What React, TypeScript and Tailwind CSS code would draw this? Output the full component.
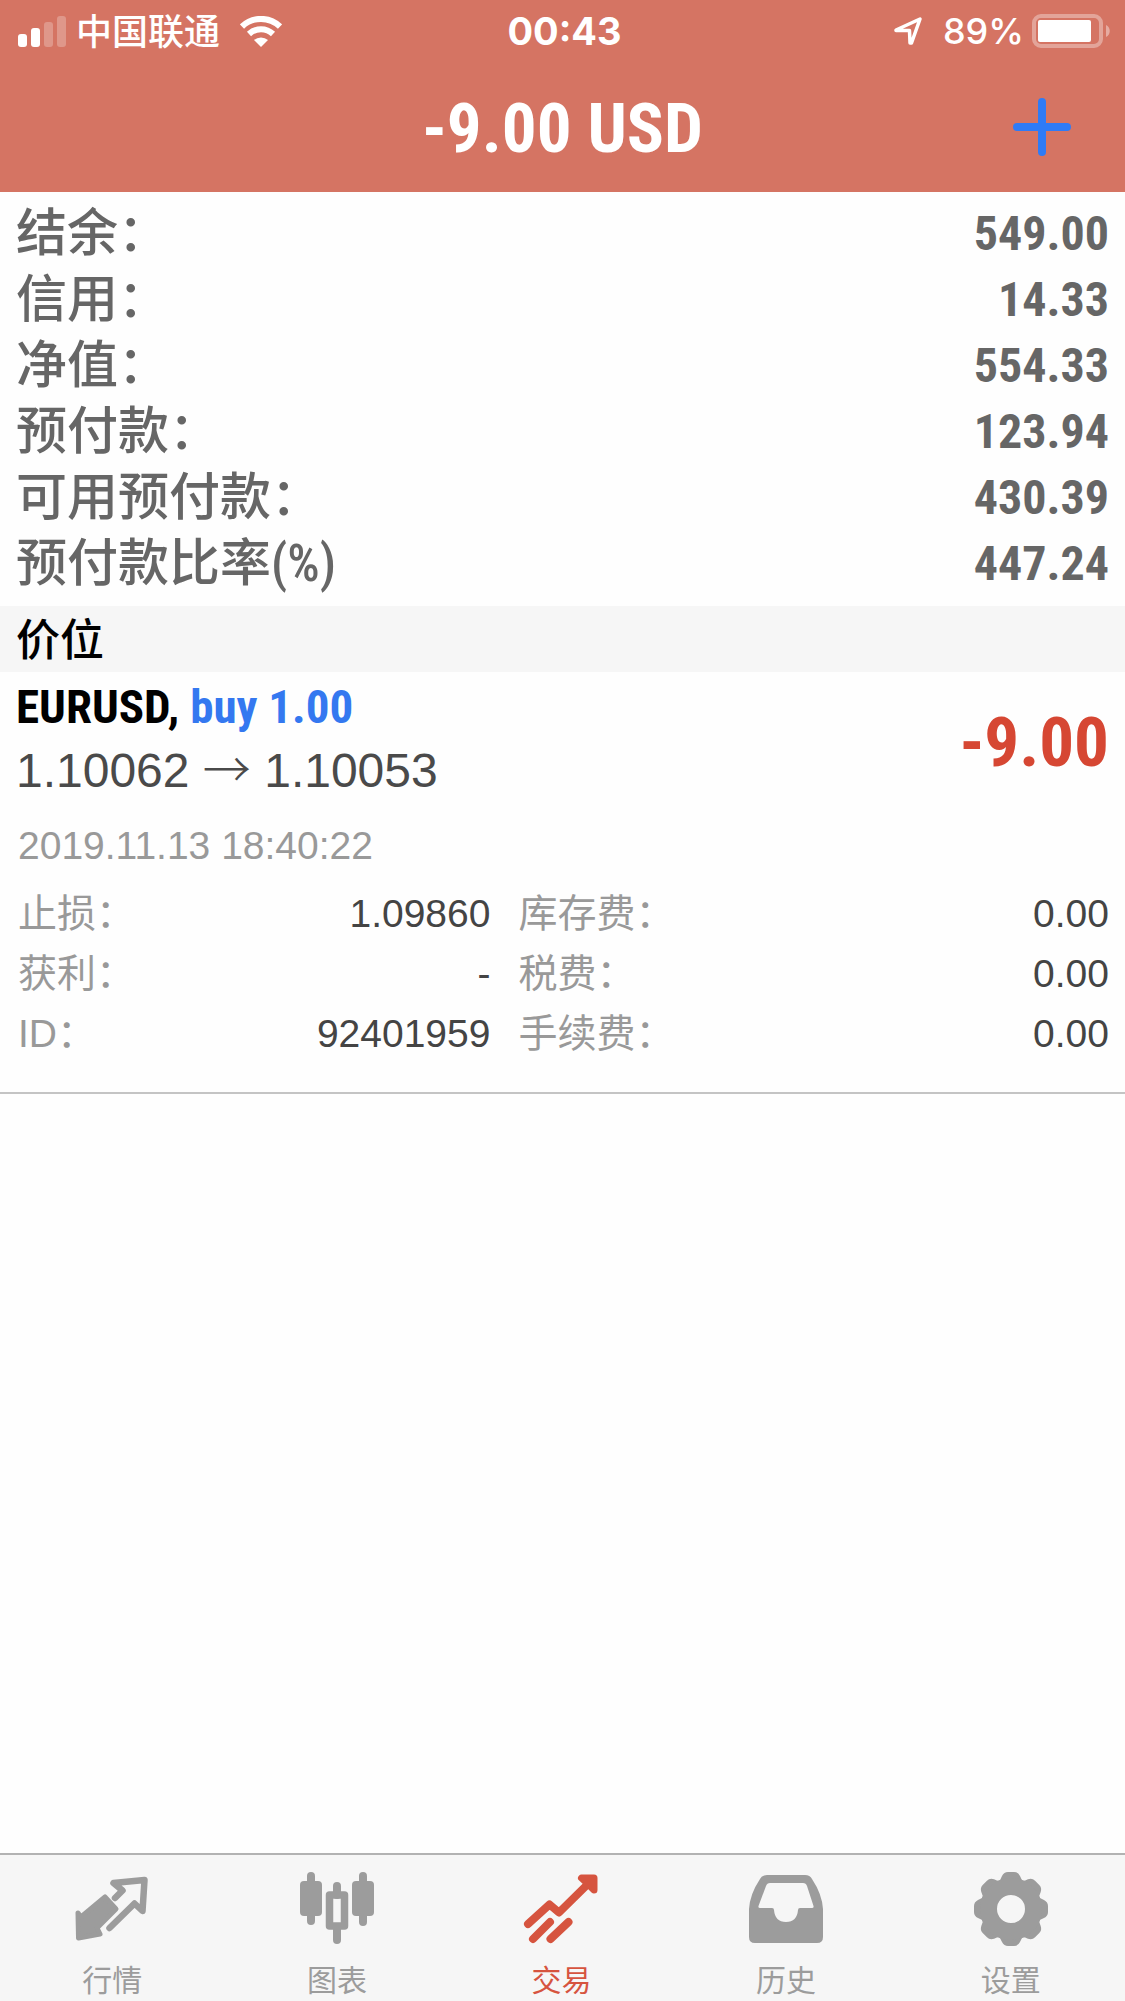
import type { ReactNode } from 'react';

const sans = "font-['Liberation_Sans','Noto_Sans_CJK_SC',sans-serif]";
const narrow = "font-['Roboto_Condensed','Noto_Sans_CJK_SC',sans-serif]";

function StatusBar() {
  return (
    <div className="grid h-[62px] grid-cols-[1fr_auto_1fr] items-center pr-[14px] pl-[18px] font-['Inter','Noto_Sans_CJK_SC',sans-serif] text-4xl leading-none">
      <div className="flex items-center">
        <svg className="h-[31px] w-12" viewBox="0 0 48 31" fill="#fff" aria-hidden="true">
          <rect x="0" y="18" width="9" height="13" rx="3" />
          <rect x="13" y="12" width="9" height="19" rx="3" />
          <rect x="26" y="6" width="9" height="25" rx="3" opacity="0.25" />
          <rect x="39" y="0" width="9" height="31" rx="3" opacity="0.25" />
        </svg>
        <span className="ml-[10px] pt-[2px] font-medium">中国联通</span>
        <svg className="ml-5 h-[31px] w-[42px]" viewBox="0 0 42 31" aria-hidden="true">
          <g fill="none" stroke="#fff" strokeWidth="6">
            <path d="M2 10.500A27.500 27.500 0 0 1 40 10.500" />
            <path d="M9 18A17.500 17.500 0 0 1 33 18" />
          </g>
          <path d="M21 31L14 24A11 11 0 0 1 28 24Z" fill="#fff" />
        </svg>
      </div>
      <time className="text-[38px] font-bold">00:43</time>
      <div className="flex items-center justify-end">
        <svg className="h-[30px] w-[30px]" viewBox="0 0 30 30" fill="none" aria-hidden="true">
          <path d="M3 14L27 3L18.500 27H17L16.500 14.500H3Z" stroke="#fff" strokeWidth="3.500" strokeLinejoin="round" />
        </svg>
        <span className="ml-5 font-medium">89%</span>
        <svg className="ml-2 h-[34px] w-[79px]" viewBox="0 0 79 34" aria-hidden="true">
          <rect x="2" y="2" width="67" height="30" rx="7" fill="none" stroke="#fff" strokeOpacity="0.35" strokeWidth="4" />
          <rect x="6" y="6" width="53" height="22" rx="2" fill="#fff" />
          <path d="M74 11C79 13 79 21 74 23Z" fill="#fff" fillOpacity="0.4" />
        </svg>
      </div>
    </div>
  );
}

const summary = [
  ['结余：', '549.00'],
  ['信用：', '14.33'],
  ['净值：', '554.33'],
  ['预付款：', '123.94'],
  ['可用预付款：', '430.39'],
  ['预付款比率(%)', '447.24'],
];

const details = [
  ['止损：', '1.09860'],
  ['库存费：', '0.00'],
  ['获利：', '-'],
  ['税费：', '0.00'],
  ['ID：', '92401959'],
  ['手续费：', '0.00'],
];

function Icon({ children }: { children: ReactNode }) {
  return (
    <svg
      className="h-[76px] w-[76px]"
      viewBox="0 0 76 76"
      fill="none"
      stroke="currentColor"
      strokeLinecap="round"
      strokeLinejoin="round"
      aria-hidden="true"
    >
      {children}
    </svg>
  );
}

const tabs: { label: string; active?: boolean; icon: ReactNode }[] = [
  {
    label: '行情',
    icon: (
      <Icon>
        <path d="M4 42L7 46L31 26L42 38L23 57L26 63L4.500 67Z" fill="currentColor" strokeWidth="5" />
        <path d="M41 27L48.500 19.500L39.500 12L70.500 9L68.500 40L60.500 32.500L35.500 57" strokeWidth="6.500" />
      </Icon>
    ),
  },
  {
    label: '图表',
    icon: (
      <Icon>
        <path d="M12 5V50M38 15V24M38 58V69M64 5V51" strokeWidth="8" />
        <rect x="1" y="10" width="22" height="35" rx="4" fill="currentColor" stroke="none" />
        <rect x="53" y="10" width="22" height="35" rx="4" fill="currentColor" stroke="none" />
        <rect x="30.500" y="24" width="15" height="31" strokeWidth="7.500" />
      </Icon>
    ),
  },
  {
    label: '交易',
    active: true,
    icon: (
      <Icon>
        <path d="M5 53L26.500 33.500L36 41.500L69 9" strokeWidth="8" />
        <path d="M58.500 7H71V19L65 13Z" fill="currentColor" strokeWidth="7" />
        <path d="M27 51L10 68M45.500 51L27.500 68" strokeWidth="8" />
      </Icon>
    ),
  },
  {
    label: '历史',
    icon: (
      <Icon>
        <path
          d="M19 4H57Q62 4 64 8Q74 23 75 38V66Q75 72 69 72H7Q1 72 1 66V38Q2 23 12 8Q14 4 19 4ZM22 12Q19 12 18 15L10.500 35Q10 37 12 37H24Q26 37 26 39Q27 51 38 51Q49 51 50 39Q50 37 52 37H64Q66 37 65.500 35L59 15Q58 12 55 12Z"
          fill="currentColor"
          fillRule="evenodd"
          stroke="none"
        />
      </Icon>
    ),
  },
  {
    label: '设置',
    icon: (
      <Icon>
        <g fill="currentColor" stroke="none">
          {[0, 45, 90, 135, 180, 225, 270, 315].map((a) => (
            <path key={a} d="M24 12Q28 9 29 5Q31 1 35 1H41Q45 1 47 5Q48 9 52 12Z" transform={`rotate(${a} 38 38)`} />
          ))}
        </g>
        <circle cx="38" cy="38" r="22.500" strokeWidth="17" />
      </Icon>
    ),
  },
];

export default function App() {
  return (
    <div className={`flex min-h-screen flex-col bg-[#fefefe] ${sans}`}>
      <header className="bg-[#d57463] text-white">
        <StatusBar />
        <div className="grid h-[130px] grid-cols-[1fr_auto_1fr] items-center pr-[54px]">
          <h1 className={`col-start-2 pt-[2px] pl-[54px] text-[69px] leading-none font-bold ${narrow}`}>-9.00 USD</h1>
          <button type="button" aria-label="新订单" className="justify-self-end">
            <svg className="h-[58px] w-[58px]" viewBox="0 0 58 58" stroke="#2f7bf6" strokeWidth="8" strokeLinecap="round" aria-hidden="true">
              <path d="M29 4V54M4 29H54" />
            </svg>
          </button>
        </div>
      </header>

      <main className="flex-1">
        <dl className="px-4 pt-[9px] pb-[9px] text-[#666]">
          {summary.map(([label, value]) => (
            <div key={label} className="flex h-[66px] items-center justify-between leading-[66px]">
              <dt className={`text-[51px] font-medium ${narrow}`}>{label}</dt>
              <dd className={`text-5xl font-bold ${narrow}`}>{value}</dd>
            </div>
          ))}
        </dl>

        <h2 className={`bg-[#f6f6f6] px-4 pt-1 text-[44px] leading-[62px] font-medium text-black ${narrow}`}>价位</h2>

        <section className="border-b-2 border-[#c4c4c4] pb-7">
          <div className="flex items-center justify-between px-4">
            <div className="pt-1">
              <h3 className={`text-[47px] leading-[62px] font-bold text-black ${narrow}`}>
                EURUSD, <span className="text-[#3478f0]">buy 1.00</span>
              </h3>
              <p className="text-5xl leading-[66px] text-[#4a4a4a]">
                1.10062 <span className="font-['Noto_Sans_CJK_SC'] leading-none font-light">→</span> 1.10053
              </p>
            </div>
            <p className={`pt-2 text-[69px] leading-none font-bold text-[#d64733] ${narrow}`}>-9.00</p>
          </div>
          <p className="px-[18px] pt-3 text-[39px] leading-[60px] text-[#999]">2019.11.13 18:40:22</p>
          <dl className="grid grid-cols-[4fr_5fr] gap-x-7 pt-2 pr-4 pl-[18px] text-[39px] leading-[60px]">
            {details.map(([label, value]) => (
              <div key={label} className="flex h-[60px] justify-between">
                <dt className="text-[#999]">{label}</dt>
                <dd className="text-[#444]">{value}</dd>
              </div>
            ))}
          </dl>
        </section>
      </main>

      <nav className="grid h-[148px] grid-cols-5 border-t-2 border-[#b2b2b2] bg-[#f6f6f6] pr-[2px]">
        {tabs.map(({ label, active, icon }) => (
          <button
            key={label}
            type="button"
            aria-current={active ? 'page' : undefined}
            className={`flex flex-col items-center gap-[14px] pt-4 text-3xl leading-10 ${active ? 'text-[#d6543f]' : 'text-[#9c9c9c]'}`}
          >
            {icon}
            <span>{label}</span>
          </button>
        ))}
      </nav>
    </div>
  );
}
